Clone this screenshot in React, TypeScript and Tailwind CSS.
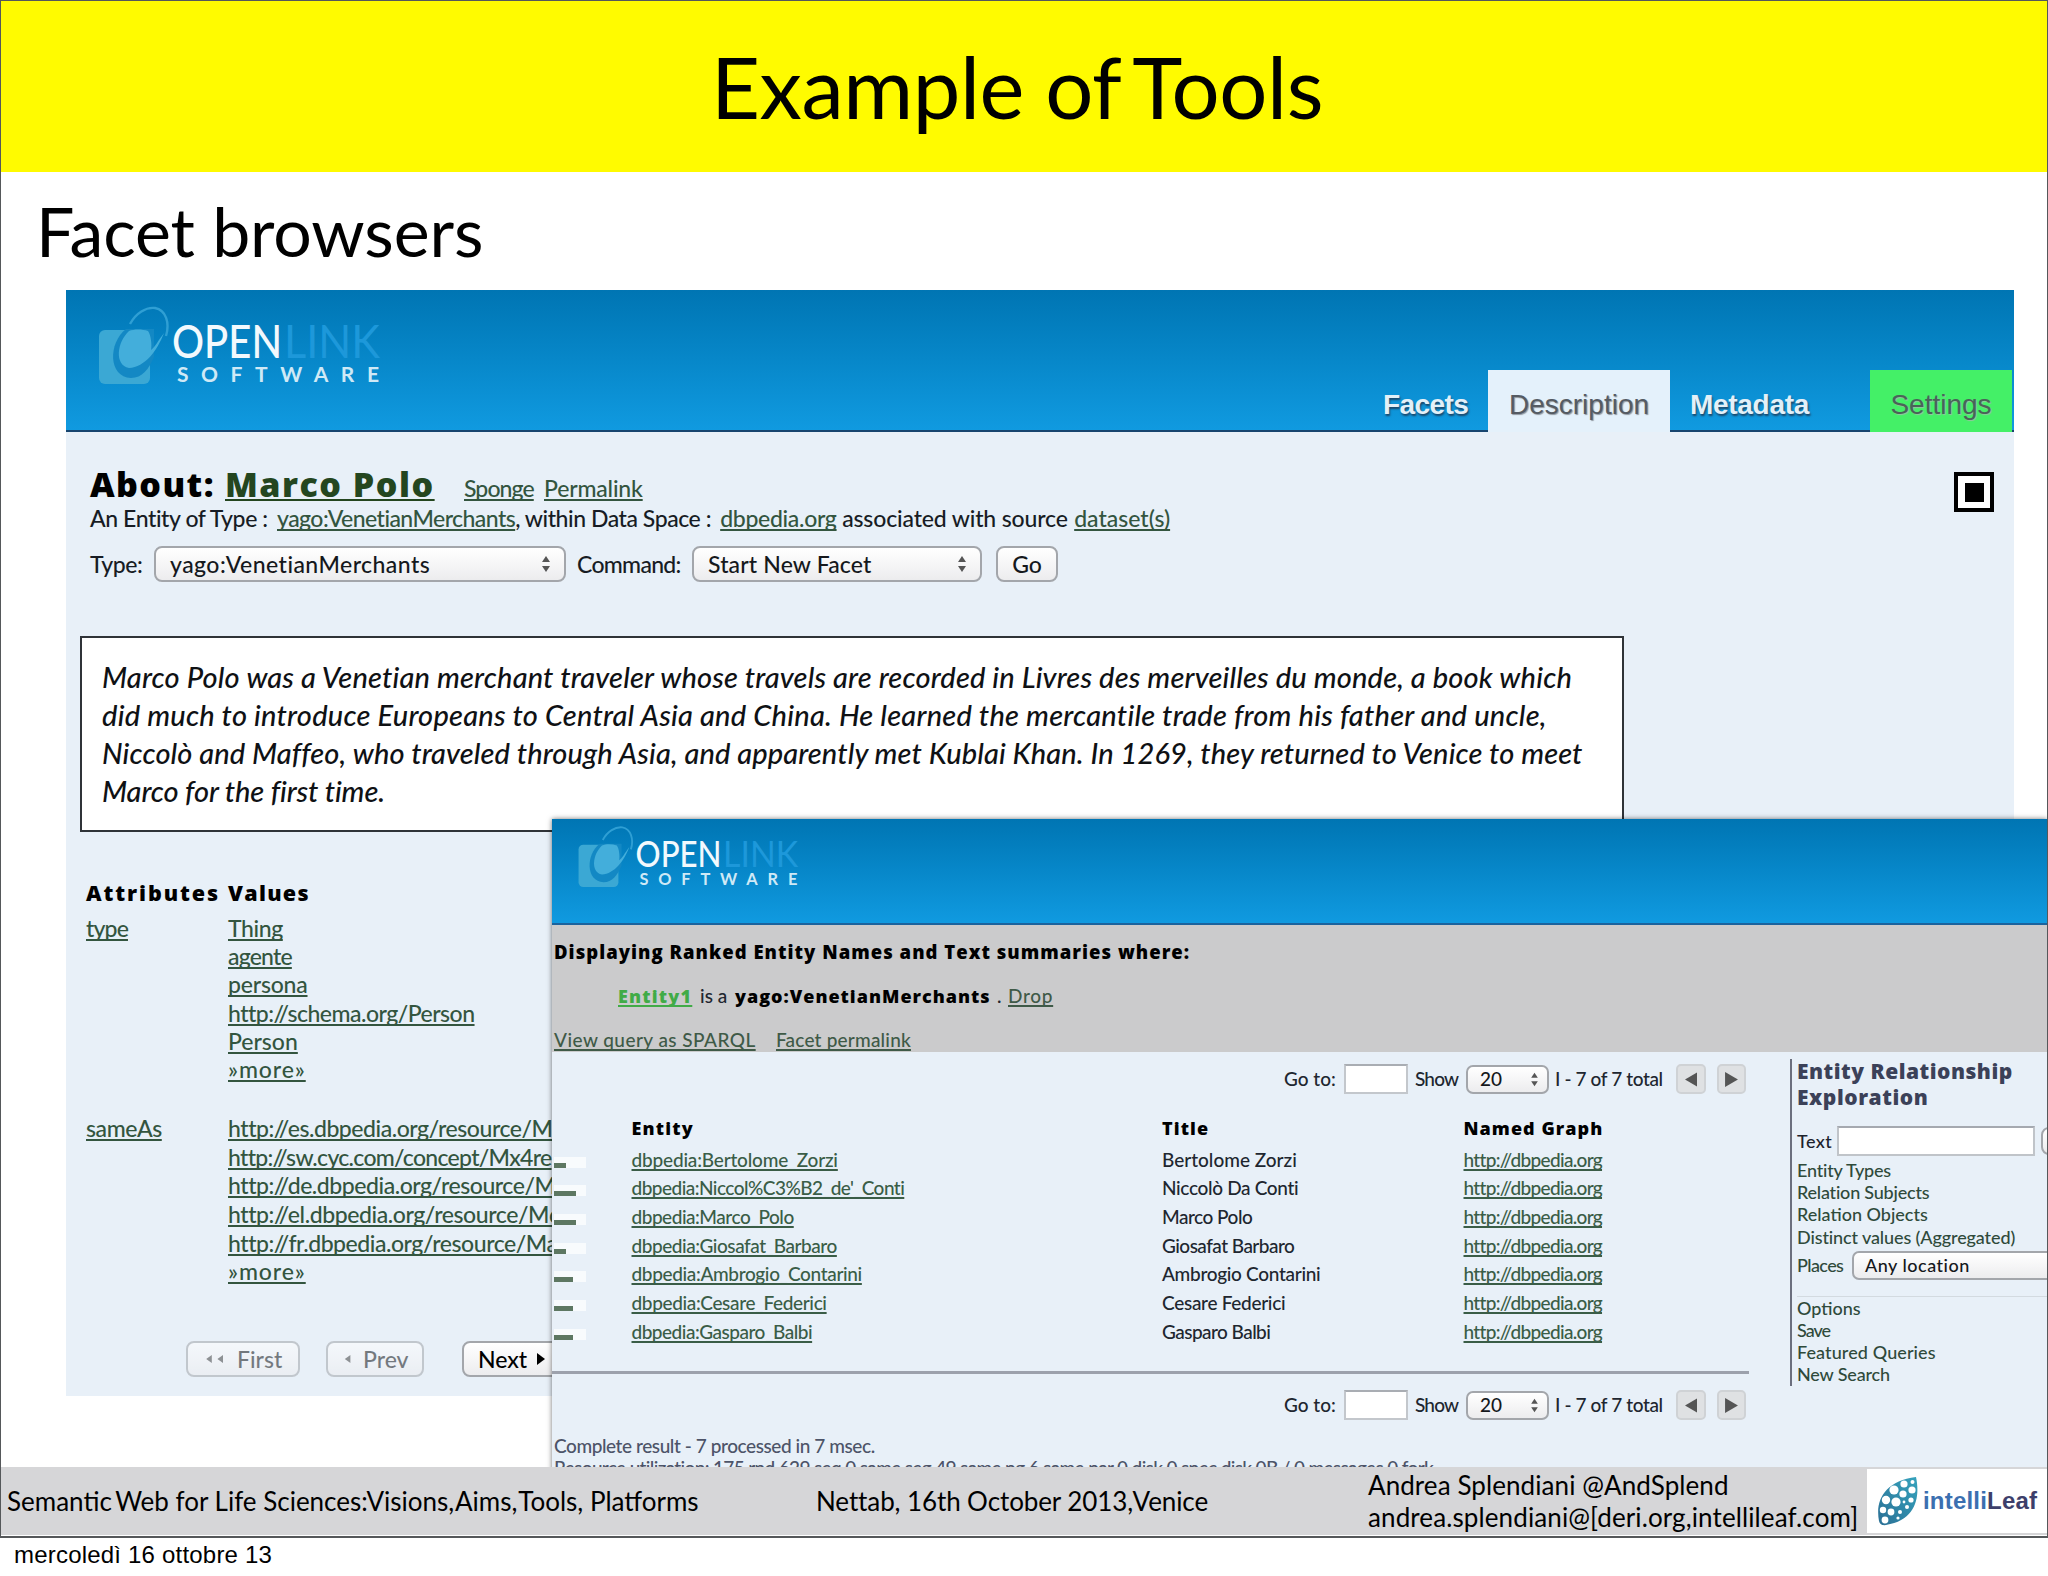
import React from 'react';
import clsx from 'clsx';

interface LinkProps {
  className?: string;
  children: React.ReactNode;
}

const ULink: React.FC<LinkProps> = ({ className, children }) => (
  <a
    href="#"
    className={clsx(
      "underline decoration-2 underline-offset-[2px] [text-decoration-skip-ink:none]",
      className ?? "text-[#33553f]"
    )}
  >
    {children}
  </a>
);

const OpenLinkLogo: React.FC<{ className: string }> = ({ className }) => (
  <svg viewBox="0 0 288 84" preserveAspectRatio="none" className={className}>
    <rect x="2" y="25" width="51" height="54" rx="6" fill="#3ba8d4" />
    <path d="M29 24 C11 38 11 72 34 73 C45 73 52 64 57 52 L57 24 Z" fill="#1388c4" />
    <path
      d="M32 26 C20 37 17 60 32 63 C48 62 60 46 67 28 C61 36 58 42 54 45 C55 40 54 30 51 26 C45 24 37 24 32 26 Z"
      fill="#43aedb"
    />
    <path d="M33 19 C39 8 49 2 58 3 C69 5 73 18 69 31" fill="none" stroke="#2f9fd4" strokeWidth="2.4" />
    <text x="75" y="53" textLength="110" lengthAdjust="spacingAndGlyphs" fontFamily="Lato" fontSize="47" fill="#f2f9fd">
      OPEN
    </text>
    <text x="187" y="53" textLength="96" lengthAdjust="spacingAndGlyphs" fontFamily="Lato" fontWeight="400" fontSize="47" fill="#1d98da">
      LINK
    </text>
    <text x="80" y="77" textLength="202" fontFamily="Lato" fontSize="21" fontWeight="700" fill="#cfe9f6">
      SOFTWARE
    </text>
  </svg>
);

const Arrows: React.FC<{ className: string }> = ({ className }) => (
  <svg viewBox="0 0 10 18" className={className} fill="#555">
    <path d="M5 1 L9 7 H1 Z" />
    <path d="M5 17 L9 11 H1 Z" />
  </svg>
);

const control =
  "flex items-center shrink-0 border-2 border-[#a3a6ab] bg-linear-to-b from-white via-[#f6f6f7] to-[#ececee] text-[#15181c]";

interface PagerProps {
  className: string;
}

const Pager: React.FC<PagerProps> = ({ className }) => (
  <div className={clsx("flex h-[30px] items-center pl-[732px] text-[19px] text-[#20262f] whitespace-nowrap", className)}>
    <span className="w-[60px] shrink-0">Go to:</span>
    <div className="h-[30px] w-16 shrink-0 border-2 border-[#c3c7cc] border-t-[#a9adb3] bg-white" />
    <span className="ml-[7px] w-[51px] shrink-0 tracking-[-0.8px]">Show</span>
    <div className={clsx(control, "h-[29px] w-[83px] justify-between rounded-[7px] pr-2 pl-3")}>
      <span>20</span>
      <Arrows className="h-[15px] w-[9px]" />
    </div>
    <span className="ml-[6px] w-[121px] shrink-0 tracking-[-0.38px]">I - 7 of 7 total</span>
    <div className="flex h-[30px] w-[30px] shrink-0 items-center justify-center rounded-[5px] border-2 border-[#cfd2d5] bg-[#dfe1e3]">
      <svg viewBox="0 0 12 14" className="h-[15px] w-3" fill="#555">
        <path d="M12 0 V14 L0 7 Z" />
      </svg>
    </div>
    <div className="ml-[11px] flex h-[30px] w-[29px] shrink-0 items-center justify-center rounded-[5px] border-2 border-[#cfd2d5] bg-[#dfe1e3]">
      <svg viewBox="0 0 12 14" className="h-[15px] w-[13px]" fill="#555">
        <path d="M0 0 V14 L12 7 Z" />
      </svg>
    </div>
  </div>
);

const typeValues = [
  { text: 'Thing', className: 'tracking-[-0.4px]' },
  { text: 'agente', className: 'tracking-[-0.8px]' },
  { text: 'persona', className: 'tracking-[-0.2px]' },
  { text: 'http://schema.org/Person', className: 'tracking-[-0.5px]' },
  { text: 'Person', className: 'tracking-normal' },
  { text: '»more»', className: 'tracking-[0.9px]' },
];

const sameAsValues = [
  { text: 'http://es.dbpedia.org/resource/Ma', className: 'tracking-[-0.45px]' },
  { text: 'http://sw.cyc.com/concept/Mx4re', className: 'tracking-[-0.7px]' },
  { text: 'http://de.dbpedia.org/resource/Ma', className: 'tracking-[-0.45px]' },
  { text: 'http://el.dbpedia.org/resource/Mα', className: 'tracking-[-0.42px]' },
  { text: 'http://fr.dbpedia.org/resource/Ma', className: 'tracking-[-0.45px]' },
  { text: '»more»', className: 'tracking-[0.9px]' },
];

const entities = [
  { name: 'dbpedia:Bertolome_Zorzi', title: 'Bertolome Zorzi', bar: 'w-3', track: 'tracking-[-0.18px]', titleTrack: 'tracking-normal' },
  { name: "dbpedia:Niccol%C3%B2_de'_Conti", title: 'Niccolò Da Conti', bar: 'w-[22px]', track: 'tracking-[-0.53px]', titleTrack: 'tracking-[-0.33px]' },
  { name: 'dbpedia:Marco_Polo', title: 'Marco Polo', bar: 'w-[22px]', track: 'tracking-[-0.48px]', titleTrack: 'tracking-[-0.5px]' },
  { name: 'dbpedia:Giosafat_Barbaro', title: 'Giosafat Barbaro', bar: 'w-3', track: 'tracking-[-0.46px]', titleTrack: 'tracking-[-0.53px]' },
  { name: 'dbpedia:Ambrogio_Contarini', title: 'Ambrogio Contarini', bar: 'w-[19px]', track: 'tracking-[-0.35px]', titleTrack: 'tracking-[-0.3px]' },
  { name: 'dbpedia:Cesare_Federici', title: 'Cesare Federici', bar: 'w-[19px]', track: 'tracking-[-0.36px]', titleTrack: 'tracking-[-0.3px]' },
  { name: 'dbpedia:Gasparo_Balbi', title: 'Gasparo Balbi', bar: 'w-[19px]', track: 'tracking-[-0.5px]', titleTrack: 'tracking-[-0.55px]' },
];

const DescriptionPage: React.FC = () => (
  <section className="ml-[65px] h-[1106px] w-[1948px] shrink-0 overflow-hidden bg-[#e8f0f8] font-medium">
    <header className="flex h-[142px] items-end justify-between border-b-2 border-[#17456f] bg-linear-to-b from-[#0075b3] to-[#109ae0]">
      <OpenLinkLogo className="mb-[41px] ml-[31px] h-[84px] w-[288px]" />
      <nav className="-mb-[2px] mr-[2px] flex h-[62px] font-['Liberation_Sans',sans-serif] text-[28px] leading-[70px] font-normal whitespace-nowrap">
        <a href="#" className="w-[125px] pl-5 font-bold tracking-[-0.6px] text-[#e3f0f8] [text-shadow:1px_2px_2px_#1c4668]">
          Facets
        </a>
        <a href="#" className="w-[182px] bg-[#e4f1fb] text-center text-[#555b63] [text-shadow:1px_1px_1px_#8f969e]">
          Description
        </a>
        <a href="#" className="w-[161px] pl-5 font-bold tracking-[-0.3px] text-[#e3f0f8] [text-shadow:1px_2px_2px_#1c4668]">
          Metadata
        </a>
        <a href="#" className="ml-[39px] w-[142px] bg-[#44f067] text-center text-[#4a6358] [text-shadow:1px_1px_1px_#93c59f]">
          Settings
        </a>
      </nav>
    </header>

    <div className="flex justify-between">
      <div className="flex flex-col text-[23px] text-[#171c24] whitespace-nowrap">
        <div className="mt-[32px] ml-6 flex h-10 items-baseline leading-10">
          <h1 className="w-[135px] font-['Open_Sans',sans-serif] text-[34px] font-extrabold tracking-[1.4px] text-black">About:</h1>
          <h1 className="w-[239px] font-['Open_Sans',sans-serif] text-[34px] font-extrabold tracking-[1.5px]">
            <ULink className="text-[#24461f]">Marco Polo</ULink>
          </h1>
          <div className="w-20 tracking-[-0.9px]"><ULink>Sponge</ULink></div>
          <div className="tracking-[-0.17px]"><ULink>Permalink</ULink></div>
        </div>
        <p className="ml-6 flex h-7 leading-7">
          <span className="w-[187px] tracking-[-0.4px]">An Entity of Type :</span>
          <span className="tracking-[-0.55px]"><ULink>yago:VenetianMerchants</ULink></span>
          <span className="w-[205px] tracking-[-0.45px]">, within Data Space :</span>
          <span className="w-[122px] tracking-[-0.3px]"><ULink>dbpedia.org</ULink></span>
          <span className="w-[232px] tracking-[-0.15px]">associated with source</span>
          <ULink>dataset(s)</ULink>
        </p>
        <div className="mt-[14px] ml-6 flex h-9 items-center">
          <span className="w-16 tracking-[-0.45px]">Type:</span>
          <div className={clsx(control, "h-9 w-[412px] justify-between rounded-lg pr-[13px] pl-3.5")}>
            <span className="tracking-[0.45px]">yago:VenetianMerchants</span>
            <Arrows className="h-[18px] w-2.5" />
          </div>
          <span className="ml-[11px] w-[115px] tracking-[-0.7px]">Command:</span>
          <div className={clsx(control, "h-9 w-[290px] justify-between rounded-lg pr-[13px] pl-3.5")}>
            <span className="tracking-[0.15px]">Start New Facet</span>
            <Arrows className="h-[18px] w-2.5" />
          </div>
          <button className={clsx(control, "ml-3.5 h-9 w-[62px] justify-center rounded-lg")}>Go</button>
        </div>

        <div className="mt-[54px] ml-3.5 h-[196px] w-[1544px] border-2 border-[#2f3338] bg-white pt-5 pl-5 text-[29px] leading-[38px] text-[#0f1114] italic">
          <p className="tracking-[0.155px]">Marco Polo was a Venetian merchant traveler whose travels are recorded in Livres des merveilles du monde, a book which</p>
          <p className="tracking-[0.215px]">did much to introduce Europeans to Central Asia and China. He learned the mercantile trade from his father and uncle,</p>
          <p className="tracking-[0.1px]">Niccolò and Maffeo, who traveled through Asia, and apparently met Kublai Khan. In 1269, they returned to Venice to meet</p>
          <p className="tracking-[-0.1px]">Marco for the first time.</p>
        </div>

        <div className="mt-[47px] ml-5 grid grid-cols-[142px_1fr] font-['Open_Sans',sans-serif] text-[21.5px] leading-7 font-extrabold text-black">
          <span className="tracking-[1.9px]">Attributes</span>
          <span className="tracking-[1.3px]">Values</span>
        </div>
        <div className="mt-[7px] ml-5 grid grid-cols-[142px_1fr] leading-[28.2px]">
          <div className="tracking-[-0.85px]"><ULink>type</ULink></div>
          <div>
            {typeValues.map((v) => (
              <div key={v.text} className={v.className}><ULink>{v.text}</ULink></div>
            ))}
          </div>
        </div>
        <div className="mt-[31px] ml-5 grid grid-cols-[142px_1fr] leading-[28.6px]">
          <div className="tracking-[-0.4px]"><ULink>sameAs</ULink></div>
          <div>
            {sameAsValues.map((v) => (
              <div key={v.text} className={v.className}><ULink>{v.text}</ULink></div>
            ))}
          </div>
        </div>

        <div className="mt-[55px] ml-[120px] flex h-9">
          <button className={clsx(control, "w-[114px] gap-[11px] rounded-lg pl-4 opacity-55")}>
            <svg viewBox="0 0 22 10" className="h-2 w-[22px]" fill="#444">
              <path d="M7 0 V10 L0 5 Z M21 0 V10 L14 5 Z" />
            </svg>
            First
          </button>
          <button className={clsx(control, "ml-[26px] w-[98px] gap-[11px] rounded-lg pl-4 opacity-55")}>
            <svg viewBox="0 0 8 10" className="h-2 w-2" fill="#444">
              <path d="M7 0 V10 L0 5 Z" />
            </svg>
            Prev
          </button>
          <button className={clsx(control, "ml-[38px] w-[110px] gap-2.5 rounded-lg pl-3.5 text-black")}>
            Next
            <svg viewBox="0 0 8 12" className="h-3 w-2" fill="#000">
              <path d="M0 0 V12 L8 6 Z" />
            </svg>
          </button>
        </div>
      </div>

      <div className="mt-10 mr-5 flex h-10 w-10 shrink-0 items-center justify-center border-4 border-black bg-white">
        <div className="h-[19px] w-[19px] bg-black" />
      </div>
    </div>
  </section>
);

const Sidebar: React.FC = () => (
  <aside className="mt-[7px] ml-[41px] h-[327px] w-[257px] shrink-0 overflow-hidden border-l-2 border-[#6b6f7e] pl-[5px] text-[18px] text-[#2f4a3b] whitespace-nowrap">
    <h2 className="font-['Open_Sans',sans-serif] text-[21px] leading-[25.5px] font-extrabold text-[#3b4158]">
      <div className="tracking-[0.5px]">Entity Relationship</div>
      <div className="tracking-[0.55px]">Exploration</div>
    </h2>
    <div className="mt-4 flex h-[30px] items-center text-[#1c222c]">
      <span className="w-10 shrink-0 tracking-[0.4px]">Text</span>
      <div className="h-[30px] w-[198px] shrink-0 border-2 border-[#c0c4c9] border-t-[#a5a9b0] bg-white" />
      <div className={clsx(control, "ml-[6px] h-7 w-10 rounded-lg")} />
    </div>
    <ul className="mt-[3px] leading-[22.2px]">
      <li className="tracking-[-0.2px]">Entity Types</li>
      <li className="tracking-[-0.21px]">Relation Subjects</li>
      <li>Relation Objects</li>
      <li className="tracking-[-0.11px]">Distinct values (Aggregated)</li>
    </ul>
    <div className="mt-[3px] flex h-[30px] items-center">
      <span className="w-[55px] shrink-0 tracking-[-0.6px]">Places</span>
      <div className={clsx(control, "h-[29px] w-[240px] rounded-[7px] pl-[11px] tracking-[0.5px]")}>Any location</div>
    </div>
    <ul className="mt-[15px] border-t border-[#d3dae0] leading-[22.2px]">
      <li>Options</li>
      <li className="tracking-[-1px]">Save</li>
      <li className="tracking-[0.1px]">Featured Queries</li>
      <li className="tracking-[-0.16px]">New Search</li>
    </ul>
  </aside>
);

const FacetPage: React.FC = () => (
  <section className="absolute top-[818px] right-0 left-[551px] h-[660px] overflow-hidden bg-[#e8f0f8] text-[19px] font-medium text-[#20262f] whitespace-nowrap shadow-[0_0_5px_rgba(0,0,0,0.55)]">
    <header className="flex h-[106px] items-start border-b-2 border-[#1b639d] bg-linear-to-b from-[#0075b3] to-[#109ae0]">
      <OpenLinkLogo className="mt-[6px] ml-[25px] h-[66px] w-[225px]" />
    </header>
    <div className="h-[127px] bg-[#cbcbcc] pt-[15px] pl-[2px] leading-6">
      <h2 className="font-['Open_Sans',sans-serif] text-[18.5px] font-extrabold tracking-[1.02px] text-black">
        Displaying Ranked Entity Names and Text summaries where:
      </h2>
      <p className="mt-5 flex pl-16">
        <b className="w-[82px] font-['Open_Sans',sans-serif] text-[18px] font-extrabold tracking-[1.2px]">
          <ULink className="text-[#41ab47]">Entity1</ULink>
        </b>
        <span className="w-[35px]">is a</span>
        <b className="w-[262px] font-['Open_Sans',sans-serif] text-[18px] font-extrabold tracking-[1px] text-black">yago:VenetianMerchants</b>
        <span className="w-[11px]">.</span>
        <span className="tracking-[0.7px]"><ULink className="text-[#3f5a47]">Drop</ULink></span>
      </p>
      <p className="mt-5 flex">
        <span className="w-[222px] tracking-[0.45px]"><ULink className="text-[#3f5a47]">View query as SPARQL</ULink></span>
        <span className="tracking-[0.2px]"><ULink className="text-[#3f5a47]">Facet permalink</ULink></span>
      </p>
    </div>

    <div className="flex">
      <div className="w-[1197px] shrink-0">
        <Pager className="mt-[12px]" />
        <div className="mt-[22px] grid grid-cols-[79.5px_530.5px_301.5px_1fr] font-['Open_Sans',sans-serif] text-[18px] leading-6 font-extrabold text-black">
          <span />
          <span className="tracking-[1.2px]">Entity</span>
          <span className="tracking-[1.1px]">Title</span>
          <span className="tracking-[1.05px]">Named Graph</span>
        </div>
        <div className="mt-[5.5px]">
          {entities.map((e) => (
            <div key={e.name} className="grid h-[28.7px] grid-cols-[79.5px_530.5px_301.5px_1fr] leading-[28.7px]">
              <div className="mt-[11px] ml-[2px] flex h-[11px] w-8 items-end bg-white/70">
                <div className={clsx("h-[5px] bg-[#5d7762]", e.bar)} />
              </div>
              <div className={e.track}><ULink className="text-[#3a5d47]">{e.name}</ULink></div>
              <div className={e.titleTrack}>{e.title}</div>
              <div className="tracking-[-0.68px]"><ULink className="text-[#3a5d47]">http://dbpedia.org</ULink></div>
            </div>
          ))}
        </div>
        <div className="mt-[25px] h-[3px] bg-[#9ca1ac]" />
        <Pager className="mt-4" />
        <div className="mt-[15px] pl-[2px] leading-[22px] text-[#4d5468]">
          <p className="tracking-[-0.43px]">Complete result - 7 processed in 7 msec.</p>
          <p className="tracking-[-0.65px]">
            Resource utilization: 175 rnd 629 seq 0 same seg 49 same pg 6 same par 0 disk 0 spec disk 0B / 0 messages 0 fork
          </p>
        </div>
      </div>
      <Sidebar />
    </div>
  </section>
);

const IntelliLeaf: React.FC = () => (
  <div className="ml-auto flex h-16 w-[180px] items-center bg-white pl-2.5">
    <svg viewBox="0 0 42 50" className="h-[50px] w-[42px] shrink-0">
      <defs>
        <linearGradient id="leaf" x1="0" y1="1" x2="1" y2="0">
          <stop offset="0" stopColor="#2b6f95" />
          <stop offset="1" stopColor="#35a3bd" />
        </linearGradient>
      </defs>
      <path d="M39 1 C43 20 40 44 9 49 Q3 50 2 45 C-2 24 8 5 39 1 Z" fill="url(#leaf)" />
      <g fill="#fff">
        <circle cx="17" cy="14" r="4.6" />
        <circle cx="27" cy="8" r="3.6" />
        <circle cx="35.5" cy="6" r="2" />
        <circle cx="35" cy="14" r="3.6" />
        <circle cx="26" cy="18" r="3.6" />
        <circle cx="9" cy="24" r="4.2" />
        <circle cx="19" cy="26" r="4.6" />
        <circle cx="34" cy="24" r="2.6" />
        <circle cx="6" cy="34" r="3.2" />
        <circle cx="14" cy="36" r="3.4" />
        <circle cx="23" cy="36" r="2" />
        <circle cx="30" cy="31" r="2" />
        <circle cx="27" cy="26" r="1.4" />
        <circle cx="21" cy="42" r="1.6" />
        <circle cx="8" cy="44" r="3.4" />
      </g>
    </svg>
    <span className="ml-1 font-['Liberation_Sans',sans-serif] text-[24px] font-bold tracking-[0.2px] text-[#3b6fb0]">
      intelli<span className="text-[#3d3f6b]">Leaf</span>
    </span>
  </div>
);

export default function App() {
  return (
    <div className="h-[1576px] w-[2048px] overflow-hidden bg-white font-['Lato',sans-serif] text-black">
      <main className="relative flex h-[1538px] flex-col overflow-hidden border-x border-t border-b-2 border-[#55585a]">
        <div className="flex h-[171px] shrink-0 items-center justify-center bg-[#fffb00] pr-3.5">
          <h1 className="text-[85px] leading-none tracking-[-0.45px] whitespace-pre">
            Example of<span className="-ml-2"> Tools</span>
          </h1>
        </div>
        <h2 className="h-[118px] shrink-0 pl-[35px] text-[68px] leading-[117px] tracking-[-0.1px]">Facet browsers</h2>
        <DescriptionPage />
        <FacetPage />
        <footer className="relative mt-auto mb-px flex h-[68px] shrink-0 items-center bg-[#d6d6d8] text-[26px] whitespace-pre">
          <span className="w-[809px] pl-[6px]">
            Semantic<span className="-ml-[3px]"> Web</span> for Life Sciences:<span className="-ml-[7px]"> Visions,</span>
            <span className="-ml-[5px]"> Aims,</span>
            <span className="-ml-[5px]"> Tools,</span> Platforms
          </span>
          <span className="w-[557px] pl-[6px] tracking-[-0.1px]">
            Nettab, 16th October 2013,<span className="-ml-1.5"> Venice</span>
          </span>
          <div className="pl-px leading-8">
            <p className="tracking-[0.08px]">Andrea Splendiani @AndSplend</p>
            <p className="tracking-[0.11px]">andrea.splendiani@[deri.org,intellileaf.com]</p>
          </div>
          <IntelliLeaf />
        </footer>
      </main>
      <p className="pl-[14px] font-['Liberation_Sans',sans-serif] text-[24px] leading-[33px] tracking-[0.2px]">
        mercoledì 16 ottobre 13
      </p>
    </div>
  );
}
